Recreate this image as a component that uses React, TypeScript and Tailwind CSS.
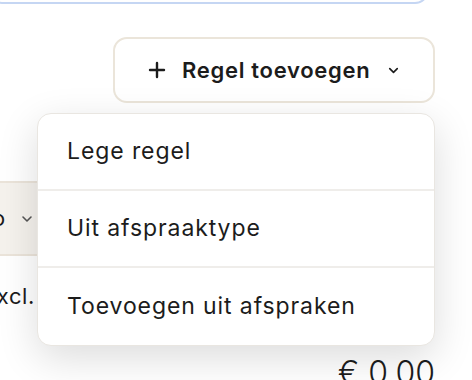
import { Plus, ChevronDown } from "lucide-react";

const menuItems = ["Lege regel", "Uit afspraaktype", "Toevoegen uit afspraken"];

const App = () => {
   return (
      <div
         className="relative w-[472px] h-[380px] overflow-hidden bg-white text-[#1c1c1c]"
         style={{ fontFamily: "Inter, 'Noto Sans', sans-serif" }}
      >
         {/* bottom edge of the focused input above */}
         <div className="-mt-[40px] -ml-[12px] w-[441px] h-[44px] rounded-b-[14px] border-2 border-[#c5d6f3] bg-white" />

         <div className="flex justify-end pr-[37px] mt-[33px]">
            <button className="flex items-center h-[66px] w-[322px] pl-[30px] rounded-[14px] border-2 border-[#ebe5da] bg-white">
               <Plus className="w-[24px] h-[24px]" strokeWidth={2.4} />
               <span className="ml-[13px] text-[22px] font-semibold tracking-[0.7px]">
                  Regel toevoegen
               </span>
               <ChevronDown className="ml-[16px] w-[15px] h-[15px]" strokeWidth={2.6} />
            </button>
         </div>

         {/* content under the menu */}
         <div className="mt-[78px] flex items-center h-[75px] w-[80px] -ml-[20px] bg-[#f5f2ed] border-y-2 border-[#ebe4da]">
            <span className="text-[22px] ml-[12px]">o</span>
            <ChevronDown className="ml-[14px] w-[16px] h-[16px] text-[#555]" strokeWidth={2.4} />
         </div>
         <div className="mt-[24px] -ml-[17px] text-[22px] tracking-[0.6px]">Excl.</div>
         <div className="mt-[36px] pr-[37px] text-right text-[32px] font-light">€ 0,00</div>

         {/* dropdown menu */}
         <div className="absolute left-[37px] top-[113px] w-[398px] rounded-[14px] border border-[#e9e6e1] bg-white shadow-[0_12px_40px_rgba(0,0,0,0.14)] overflow-hidden">
            {menuItems.map((item, i) => (
               <div
                  key={item}
                  className={`flex items-center h-[77px] px-[29px] text-[23px] tracking-[0.9px] ${
                     i < menuItems.length - 1 ? "border-b-2 border-[#efedea]" : ""
                  }`}
               >
                  {item}
               </div>
            ))}
         </div>
      </div>
   );
};

export default App;
